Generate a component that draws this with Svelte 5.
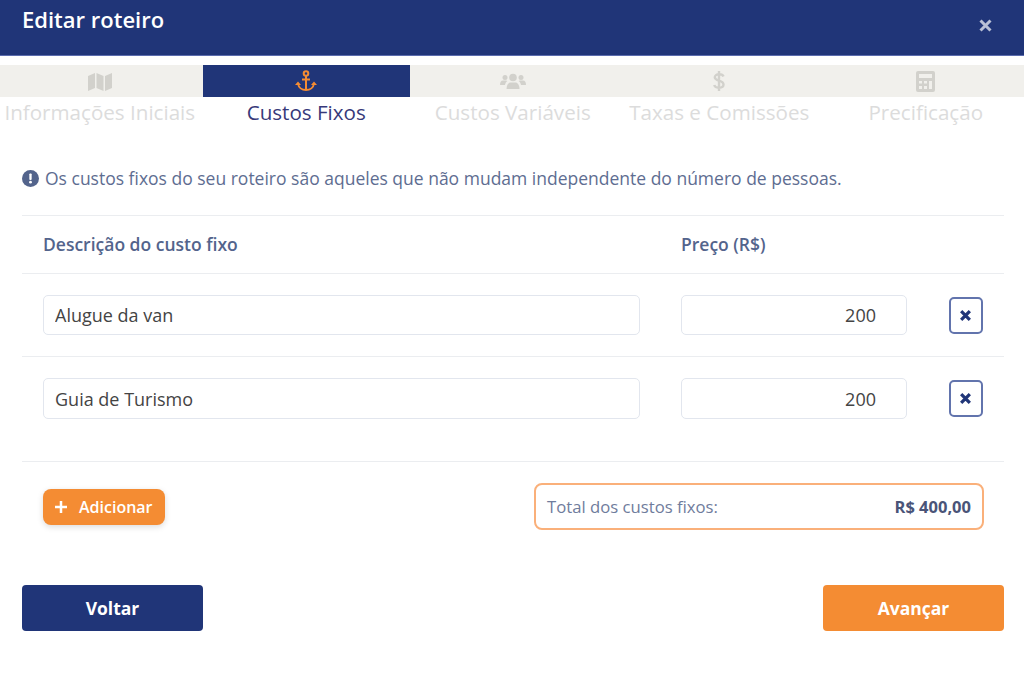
<script lang="ts">
  const tabs = [
    { label: 'Informações Iniciais', icon: 'map' },
    { label: 'Custos Fixos', icon: 'anchor', active: true },
    { label: 'Custos Variáveis', icon: 'users' },
    { label: 'Taxas e Comissões', icon: 'dollar' },
    { label: 'Precificação', icon: 'calc' }
  ];

  let rows = [
    { description: 'Alugue da van', price: '200' },
    { description: 'Guia de Turismo', price: '200' }
  ];
</script>

<div class="modal">
  <header class="top">
    <h1>Editar roteiro</h1>
    <button class="close" aria-label="Fechar">
      <svg viewBox="0 0 13 13" width="13" height="13"><path d="M1.500 1.500l10 10M11.500 1.500l-10 10" /></svg>
    </button>
  </header>

  <nav class="tabs">
    {#each tabs as tab}
      <div class="tab" class:active={tab.active}>
        <div class="tab-icon">
          {#if tab.icon === 'map'}
            <svg viewBox="0 0 24 19" width="24" height="19">
              <path class="fill" d="M0 4 7 1V16L0 19ZM8.500 1 15.500 4V19L8.500 16ZM17 4 24 1V16L17 19Z" />
            </svg>
          {:else if tab.icon === 'anchor'}
            <svg viewBox="0 0 24 24" width="24" height="24">
              <g class="line">
                <circle cx="12" cy="4.500" r="2.300" />
                <path d="M12 7V20.500M8 10.500H16" />
                <path d="M4 14.500C4.500 18.500 8 21 12 21s7.500-2.500 8-6.500" />
              </g>
              <path class="fill" d="M1 16 4 12.500 7 16ZM17 16 20 12.500 23 16Z" />
            </svg>
          {:else if tab.icon === 'users'}
            <svg viewBox="0 0 26 20" width="26" height="20">
              <g class="fill">
                <circle cx="13" cy="6.500" r="3.800" />
                <path d="M6.500 18c0-4 2-6.500 4-6.500h5c2 0 4 2.500 4 6.500Z" />
                <circle cx="5" cy="6.500" r="2.500" />
                <circle cx="21" cy="6.500" r="2.500" />
                <path d="M0 14c0-3 1-4.500 3-4.500h3c.6 0 1 .2 1.400.5C6 11 5.200 12.500 5 14ZM26 14c0-3-1-4.500-3-4.500h-3c-.6 0-1 .2-1.400.5 1.400 1 2.200 2.500 2.400 4Z" />
              </g>
            </svg>
          {:else if tab.icon === 'dollar'}
            <svg viewBox="0 0 14 22" width="14" height="22">
              <path class="dollar" d="M11.500 6.500C11 5 9.500 4.300 7 4.300 4.500 4.300 2.800 5.500 2.800 7.300c0 4.200 8.700 2.600 8.700 7.200 0 2-1.800 3.200-4.500 3.200-2.500 0-4.300-1-4.800-2.700M7 1v20" />
            </svg>
          {:else}
            <svg viewBox="0 0 19 21" width="19" height="21">
              <path class="fill" fill-rule="evenodd" d="M2 0h15a2 2 0 0 1 2 2v17a2 2 0 0 1-2 2H2a2 2 0 0 1-2-2V2a2 2 0 0 1 2-2ZM3 3v4h13V3ZM3 10v2.500h3V10ZM8 10v2.500h3V10ZM13 10v8h3V10ZM3 15v3h3V15ZM8 15v3h3V15Z" />
            </svg>
          {/if}
        </div>
        <span class="tab-label">{tab.label}</span>
      </div>
    {/each}
  </nav>

  <section class="content">
    <p class="info">
      <svg viewBox="0 0 16 16" width="17" height="17">
        <circle cx="8" cy="8" r="8" fill="#53648c" />
        <rect x="6.900" y="3.300" width="2.200" height="6" rx="0.800" fill="#fff" />
        <circle cx="8" cy="11.500" r="1.300" fill="#fff" />
      </svg>
      Os custos fixos do seu roteiro são aqueles que não mudam independente do número de pessoas.
    </p>

    <div class="row head">
      <span class="col-desc">Descrição do custo fixo</span>
      <span class="col-price">Preço (R$)</span>
    </div>

    {#each rows as row}
      <div class="row item">
        <input class="col-desc" type="text" bind:value={row.description} />
        <input class="col-price price" type="text" bind:value={row.price} />
        <button class="remove" aria-label="Remover">
          <svg viewBox="0 0 12 12" width="13" height="13"><path d="M2 2l8 8M10 2l-8 8" /></svg>
        </button>
      </div>
    {/each}

    <div class="summary">
      <button class="add">
        <svg viewBox="0 0 14 14" width="14" height="14"><path d="M7 1v12M1 7h12" /></svg>
        Adicionar
      </button>
      <div class="total">
        <span>Total dos custos fixos:</span>
        <strong>R$ 400,00</strong>
      </div>
    </div>

    <div class="actions">
      <button class="btn back">Voltar</button>
      <button class="btn next">Avançar</button>
    </div>
  </section>
</div>

<style>
  :global(body) {
    background: #fff;
    overflow: hidden;
  }

  .modal {
    width: 1024px;
    height: 656px;
    font-family: 'Open Sans', sans-serif;
    color: #444;
  }

  .top {
    height: 56px;
    background: #203578;
    border-bottom: 1px solid #5b6cae;
    box-sizing: border-box;
    display: flex;
    justify-content: space-between;
    padding: 0 32px 0 22px;
  }

  h1 {
    margin: 4px 0 0;
    color: #fff;
    font-size: 22px;
    line-height: 30px;
    font-weight: 600;
  }

  .close {
    background: none;
    border: none;
    padding: 0;
    margin-top: 19px;
    height: 13px;
    display: flex;
  }

  .close path {
    stroke: #b9c0d6;
    stroke-width: 3;
    fill: none;
  }

  .tabs {
    display: grid;
    grid-template-columns: repeat(5, 206.500px);
    margin: 9px 0 0 -3.500px;
    width: 1032.500px;
  }

  .tab {
    text-align: center;
  }

  .tab-icon {
    height: 32px;
    background: #f1f0ec;
    display: flex;
    align-items: center;
    justify-content: center;
  }

  .tab.active .tab-icon {
    background: #203578;
  }

  .tab-label {
    display: block;
    margin-top: 1px;
    height: 29px;
    font-size: 20.600px;
    line-height: 28px;
    color: #dcdcdc;
    white-space: nowrap;
  }

  .tab.active .tab-label {
    color: #37397a;
  }

  .fill {
    fill: #d2d1cc;
  }

  .dollar {
    fill: none;
    stroke: #d2d1cc;
    stroke-width: 2.400;
  }

  .tab.active .fill {
    fill: #f48c33;
  }

  .line {
    fill: none;
    stroke: #f48c33;
    stroke-width: 2;
  }

  .content {
    padding: 0 20px 0 22px;
  }

  .info {
    margin: 39px 0 0;
    height: 49px;
    display: flex;
    align-items: flex-start;
    gap: 6px;
    font-size: 17.500px;
    line-height: 24px;
    color: #5e6d91;
    white-space: nowrap;
  }

  .info svg {
    margin-top: 4px;
    flex: none;
  }

  .row {
    display: flex;
    align-items: center;
    border-top: 1px solid #ebedf0;
    padding: 0 21px;
  }

  .col-desc {
    width: 596.500px;
    box-sizing: border-box;
    flex: none;
  }

  .col-price {
    width: 226px;
    margin-left: 41.500px;
    box-sizing: border-box;
    flex: none;
  }

  .head {
    height: 56px;
    padding-bottom: 1px;
    font-size: 17.500px;
    font-weight: 600;
    color: #53648c;
  }

  .item {
    height: 82px;
  }

  .item + .item {
    height: 105px;
    align-items: flex-start;
    padding-top: 21px;
    box-sizing: border-box;
  }

  .item + .item input {
    height: 41px;
  }

  input {
    height: 40px;
    border: 1px solid #e2e6ee;
    border-radius: 5px;
    background: #fff;
    padding: 0 11px;
    font-family: inherit;
    font-size: 18px;
    color: #444;
    outline: none;
  }

  .price {
    text-align: right;
    padding-right: 30px;
  }

  .remove {
    width: 35px;
    height: 37px;
    margin-left: 41.500px;
    border: 2px solid #6274ad;
    border-radius: 5px;
    background: #fff;
    padding: 0;
    display: flex;
    align-items: center;
    justify-content: center;
  }

  .item + .item .remove {
    margin-top: 2px;
  }

  .remove path {
    stroke: #203578;
    stroke-width: 3;
    fill: none;
  }

  .summary {
    border-top: 1px solid #ebedf0;
    display: flex;
    align-items: center;
    justify-content: space-between;
    padding: 21px 20px 0 21px;
    height: 47px;
  }

  .add {
    width: 122px;
    height: 36px;
    display: flex;
    align-items: center;
    gap: 11px;
    background: #f48c33;
    border: none;
    border-radius: 8px;
    box-shadow: 0 2px 6px rgba(0, 0, 0, 0.14);
    color: #fff;
    font-family: inherit;
    font-size: 16px;
    font-weight: 600;
    padding: 0 0 0 11px;
  }

  .add path {
    stroke: #fff;
    stroke-width: 2.500;
    fill: none;
  }

  .total {
    width: 450px;
    height: 47px;
    box-sizing: border-box;
    display: flex;
    align-items: center;
    justify-content: space-between;
    padding: 0 11px;
    border: 2px solid #fab07a;
    border-radius: 8px;
    font-size: 16.700px;
    color: #6f7c9c;
  }

  .total strong {
    font-weight: 700;
    font-size: 16.500px;
    color: #4a5478;
  }

  .actions {
    display: flex;
    justify-content: space-between;
    margin-top: 55px;
  }

  .btn {
    width: 181px;
    height: 46px;
    border: none;
    border-radius: 4px;
    color: #fff;
    font-family: inherit;
    font-size: 17.500px;
    font-weight: 700;
  }

  .back {
    background: #203578;
  }

  .next {
    background: #f48c33;
  }
</style>
